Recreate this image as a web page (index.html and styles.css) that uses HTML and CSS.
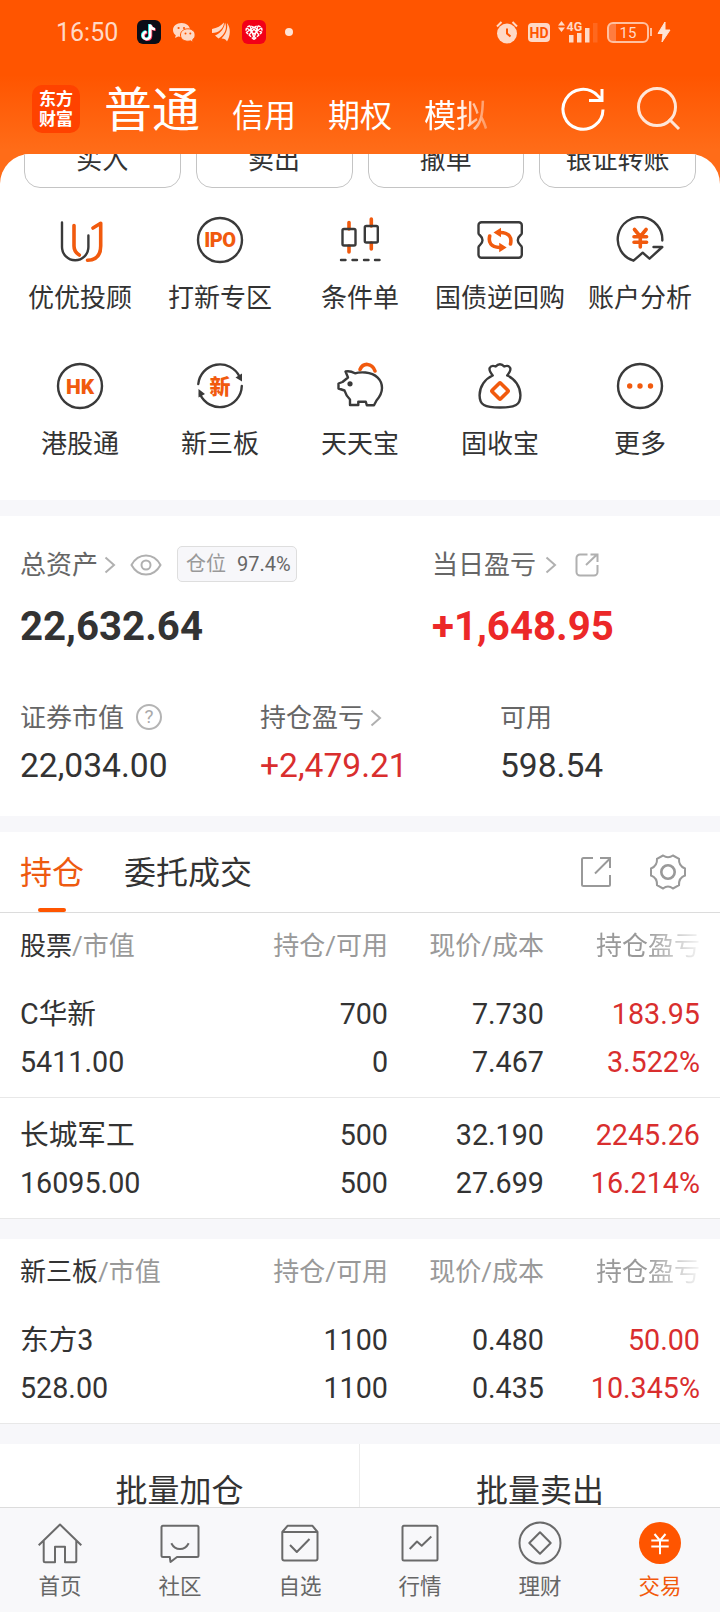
FILE: index.html
```html
<!DOCTYPE html>
<html lang="zh-CN">
<head>
    <meta charset="UTF-8">
    <meta name="viewport" content="width=device-width, initial-scale=1.0">
    <title>交易</title>
    <link rel="stylesheet" href="styles.css">
</head>
<body>
    <header class="header">
        <div class="status-bar">
            <span class="time">16:50</span>
            <div class="status-apps">
                <svg class="app-tiktok" width="24" height="24" viewBox="0 0 24 24">
                    <rect width="24" height="24" rx="6" fill="#0b0d17"/>
                    <g fill="none" stroke-width="2.6">
                        <path d="M12.4 4v11.2a3.6 3.6 0 1 1-3.6-3.6M12.4 4.4c.4 2.6 2.2 4.2 4.8 4.4" stroke="#25f4ee"/>
                        <path d="M14 5v11.2a3.6 3.6 0 1 1-3.6-3.6M14 5.4c.4 2.6 2.2 4.2 4.8 4.4" stroke="#fe2c55"/>
                        <path d="M13.2 4.4v11.2a3.6 3.6 0 1 1-3.6-3.6M13.2 4.8c.4 2.6 2.2 4.2 4.8 4.4" stroke="#fff"/>
                    </g>
                </svg>
                <svg class="app-wechat" width="24" height="24" viewBox="0 0 24 24">
                    <path d="M9.5 3C4.5 3 1 6 1 10c0 2.200 1 4 2.800 5.200L3 18l3.200-1.600c1 .3 2 .4 3.300.4C14.500 16.800 18 14 18 10s-3.500-7-8.500-7z" fill="#ffd9c6"/>
                    <path d="M15.800 8.800c-4.200 0-7.300 2.600-7.300 6.200s3.100 6.200 7.300 6.200c1 0 1.800-.1 2.600-.4l2.900 1.400-.8-2.400c1.600-1.200 2.600-2.800 2.600-4.800 0-3.600-3.100-6.200-7.300-6.200z" fill="#ffd9c6" stroke="#ff5500" stroke-width="1"/>
                    <g fill="#ff5500"><circle cx="6.600" cy="8" r="1.100"/><circle cx="12" cy="8" r="1.100"/><circle cx="13.500" cy="13.400" r="1"/><circle cx="18.300" cy="13.400" r="1"/></g>
                </svg>
                <svg class="app-wing" width="20" height="24" viewBox="0 0 20 24" fill="#ffd9c6">
                    <path d="M1 9C6 8 10 6 13 2.500 13 8 8 13 1 13z"/>
                    <path d="M4 15.500C10 13 13.500 8 14 2.500 16.500 8 14 15 7.500 18.500z"/>
                    <path d="M10.500 18.500C15 14 17 9 16 3c4 5 3.500 13 0 18.500-1-2-2.500-3-5.500-3z"/>
                </svg>
                <svg class="app-heart" width="24" height="24" viewBox="0 0 24 24">
                    <rect width="24" height="24" rx="6" fill="#f20018"/>
                    <path d="M12 19.500L5 13c-2-3-.5-6.500 2.500-7 2 0 3.500.7 4.500 2.200C13 6.700 14.500 6 16.500 6c3 .5 4.500 4 2.500 7z" fill="none" stroke="#fff" stroke-width="1.500" stroke-dasharray="3 1"/>
                    <path d="M5 12l7-5 7 5M7 15l5-6 5 6M8 6l4 12 4-12M5 8l7 6 7-6" fill="none" stroke="#fff" stroke-width="1.300"/>
                </svg>
                <span class="dot"></span>
            </div>
            <div class="status-system">
                <svg width="22" height="24" viewBox="0 0 22 24">
                    <circle cx="11" cy="13.500" r="10" fill="#ffd9c6"/>
                    <path d="M1 6.500L5.500 2M21 6.500L16.500 2" stroke="#ffd9c6" stroke-width="2"/>
                    <path d="M11 8.500v5l3.500 3" fill="none" stroke="#ff5500" stroke-width="2"/>
                </svg>
                <span class="hd">HD</span>
                <svg class="signal" width="41" height="24" viewBox="0 0 41 24" fill="#ffd9c6">
                    <path d="M1 5.500L4.500 1 8 5.500zM1 7.500h7L4.500 12z"/>
                    <text x="9.500" y="11" class="net">4G</text>
                    <rect x="12" y="15" width="4.500" height="7.500"/>
                    <rect x="20" y="13" width="4.500" height="9.500"/>
                    <rect x="28" y="8" width="4.500" height="14.500"/>
                    <rect x="36" y="3" width="4.500" height="19.500" opacity=".15"/>
                </svg>
                <span class="battery">15</span>
                <span class="battery-tip"></span>
                <svg class="bolt" width="14" height="22" viewBox="0 0 14 22"><path d="M8 1L1 12.500h5L5 21l8-12H8z" fill="#ffe3d5" stroke="#ffe3d5"/></svg>
            </div>
        </div>
        <nav class="account-bar">
            <div class="logo"><span>东方</span><span>财富</span></div>
            <div class="account-tabs">
                <span class="current">普通</span>
                <span>信用</span>
                <span>期权</span>
                <span class="fade-out">模拟</span>
            </div>
            <svg class="refresh" width="44" height="44" viewBox="0 0 44 44" fill="none" stroke="#fff" stroke-width="3">
                <path d="M42 22.500A20 20 0 1 1 36.500 8.500l4.500 4.500M41 2v11.500H28"/>
            </svg>
            <svg class="search" width="44" height="44" viewBox="0 0 44 44" fill="none" stroke="#ffe6d8" stroke-width="3">
                <circle cx="20" cy="20" r="18.500"/><path d="M32 32l10 10"/>
            </svg>
        </nav>
    </header>

    <section class="sheet">
        <div class="actions">
            <button>买入</button>
            <button>卖出</button>
            <button>撤单</button>
            <button>银证转账</button>
        </div>
        <div class="quick-grid">
            <a class="quick">
                <svg viewBox="0 0 48 48">
                    <path d="M6 6.500V31a13.200 13.200 0 0 0 26.400 0V19.500"/>
                    <path class="hot" d="M18 9.500V30c0 4 2 7 5.300 9M37 12l7.700-4.700V30c0 9-4 14-13.200 14.300"/>
                </svg>
                <span>优优投顾</span>
            </a>
            <a class="quick">
                <svg viewBox="0 0 48 48"><circle cx="24" cy="24" r="22"/><text x="24" y="31" class="ipo">IPO</text></svg>
                <span>打新专区</span>
            </a>
            <a class="quick">
                <svg viewBox="0 0 48 48">
                    <path class="hot" d="M13 6.500V13M13 30v6M35.300 3v7M35.300 27v6"/>
                    <rect x="6.500" y="13" width="13" height="16.500" rx="1.500"/>
                    <rect x="28.800" y="10" width="13" height="16.500" rx="1.500"/>
                    <path d="M5 44h4.500M16.500 44H21M28 44h4.500M39 44h4.500"/>
                </svg>
                <span>条件单</span>
            </a>
            <a class="quick">
                <svg viewBox="0 0 48 48">
                    <path d="M5.500 6.200h37.300a3 3 0 0 1 3 3v8c0 2-4 2.500-4 7s4 5 4 7v7.600a3 3 0 0 1-3 3H5.500a3 3 0 0 1-3-3v-7.600c0-2 4-2.500 4-7s-4-5-4-7v-8a3 3 0 0 1 3-3z"/>
                    <path class="hot" d="M34.500 28c1.500-6.500-1-11-10-11.500M13.700 20c-1.500 6.500 1 11 10 11.500"/>
                    <path class="hot-fill" d="M17.500 16.500l7.500-4.800v9.600zM30.700 31.500l-7.500-4.800v9.600z"/>
                </svg>
                <span>国债逆回购</span>
            </a>
            <a class="quick">
                <svg viewBox="0 0 48 48">
                    <path d="M46.300 24.500A22.300 22.300 0 1 0 17.500 44.700l9.200-8 6.800 6L46.300 31H37.500"/>
                    <path class="hot" d="M18.500 13.500l5.800 7 5.800-7M24.300 20.500V31M18 20.800h12.600M18 26.200h12.600"/>
                </svg>
                <span>账户分析</span>
            </a>
            <a class="quick">
                <svg viewBox="0 0 48 48"><circle cx="24" cy="24" r="22"/><text x="24" y="31.500" class="hk">HK</text></svg>
                <span>港股通</span>
            </a>
            <a class="quick">
                <svg viewBox="0 0 48 48">
                    <path d="M2.300 22A21.800 21.800 0 0 1 43.500 14.500M45.800 24A21.800 21.800 0 0 1 4 32"/>
                    <path class="dark-fill" d="M39.500 15.500l6.500-4v8zM9 32l-6.500-5v8.500z"/>
                    <text x="24" y="31.500" class="xin">新</text>
                </svg>
                <span>新三板</span>
            </a>
            <a class="quick">
                <svg viewBox="0 0 48 48">
                    <path class="hot" d="M24 7.500c3-7 12-7 15 1.500"/>
                    <path d="M12 15.500l-2.500-6c3-.8 6-.2 9.500 1.800 3-1 7-1 10.500-.8C40 11.500 46 18 46 26c0 5.500-2.500 9-5.500 12.500L38 43.300h-7.200l-1-3.600h-7.500V43H14v-5.500C11.500 35 9.500 32 8.500 28.500l-6-2v-5l4-1.500z"/>
                    <circle class="dark-fill" cx="14" cy="21.800" r="2.600"/>
                </svg>
                <span>天天宝</span>
            </a>
            <a class="quick">
                <svg viewBox="0 0 48 48">
                    <path d="M16.700 13.500c-2-2.500-4-5-3-7.500 1-2 3.500-2.500 6-1.500 2.500-3 6-3 8.500 0 2.500-1 5-.5 6 1.500 1 2.500-1 5-3 7.500 8 3.500 13 11 13.200 19.500.2 10-5 12.500-20.400 12.500S3.400 43 3.600 33c.2-8.500 5.100-16 13.100-19.500z"/>
                    <rect class="hot" x="18" y="23" width="12" height="12" rx="1" transform="rotate(45 24 29)"/>
                </svg>
                <span>固收宝</span>
            </a>
            <a class="quick">
                <svg viewBox="0 0 48 48">
                    <circle cx="24" cy="24" r="22"/>
                    <g class="hot-fill"><circle cx="13.700" cy="24" r="2.700"/><circle cx="24" cy="24" r="2.700"/><circle cx="34.500" cy="24" r="2.700"/></g>
                </svg>
                <span>更多</span>
            </a>
        </div>
    </section>

    <section class="assets">
        <div class="assets-main">
            <div>
                <div class="label">
                    <span>总资产</span>
                    <svg class="chevron" width="12" height="18" viewBox="0 0 12 18"><path d="M1.500 1.500L10 9l-8.500 7.500"/></svg>
                    <svg class="eye" width="32" height="22" viewBox="0 0 32 22"><path d="M1.500 11C5 4.500 10 1.500 16 1.500S27 4.500 30.500 11C27 17.500 22 20.500 16 20.500S5 17.500 1.500 11z"/><circle cx="16" cy="11" r="4.500"/></svg>
                    <span class="badge">仓位 <b>97.4%</b></span>
                </div>
                <div class="total">22,632.64</div>
            </div>
            <div>
                <div class="label">
                    <span>当日盈亏</span>
                    <svg class="chevron wide" width="12" height="18" viewBox="0 0 12 18"><path d="M1.500 1.500L10 9l-8.500 7.500"/></svg>
                    <svg class="share" width="24" height="24" viewBox="0 0 24 24"><path d="M12.500 1.500H5A3.500 3.500 0 0 0 1.500 5v14A3.500 3.500 0 0 0 5 22.500h14a3.500 3.500 0 0 0 3.500-3.500v-7M11 12L22 1.500M15.500 1.500h7V9"/></svg>
                </div>
                <div class="total up">+1,648.95</div>
            </div>
        </div>
        <div class="assets-sub">
            <div>
                <div class="label">
                    <span>证券市值</span>
                    <span class="help">?</span>
                </div>
                <div class="amount">22,034.00</div>
            </div>
            <div>
                <div class="label">
                    <span>持仓盈亏</span>
                    <svg class="chevron" width="12" height="18" viewBox="0 0 12 18"><path d="M1.500 1.500L10 9l-8.500 7.500"/></svg>
                </div>
                <div class="amount up">+2,479.21</div>
            </div>
            <div>
                <div class="label"><span>可用</span></div>
                <div class="amount">598.54</div>
            </div>
        </div>
    </section>

    <section class="positions">
        <div class="tabs">
            <span class="tab active">持仓</span>
            <span class="tab">委托成交</span>
            <svg class="tab-share" width="32" height="32" viewBox="0 0 32 32"><path d="M13 2H3.500A1.500 1.500 0 0 0 2 3.500v25A1.500 1.500 0 0 0 3.500 30h25a1.500 1.500 0 0 0 1.500-1.500V19M15 17.500L30 2.500M20 2h10v10"/></svg>
            <svg width="38" height="38" viewBox="0 0 38 38"><path d="M14 2.500c3 2 7 2 10 0l6 3.300c-.3 4.700 1.500 8 6 9.700v7c-4.500 1.700-6.300 5-6 9.700l-6 3.300c-3-2.500-7-2.500-10 0l-6-3.300c.3-4.700-1.500-8-6-9.700v-7c4.500-1.700 6.300-5 6-9.700z"/><circle cx="19" cy="19" r="6.700" stroke-width="2.600"/></svg>
        </div>

        <div class="table">
            <div class="thead">
                <span><em>股票</em>/市值</span>
                <span>持仓/可用</span>
                <span>现价/成本</span>
                <span class="clipped">持仓盈亏</span>
            </div>
            <div class="trow">
                <span>C华新<br>5411.00</span>
                <span>700<br>0</span>
                <span>7.730<br>7.467</span>
                <span class="up">183.95<br>3.522%</span>
            </div>
            <div class="trow">
                <span>长城军工<br>16095.00</span>
                <span>500<br>500</span>
                <span>32.190<br>27.699</span>
                <span class="up">2245.26<br>16.214%</span>
            </div>
        </div>

        <div class="table">
            <div class="thead">
                <span><em>新三板</em>/市值</span>
                <span>持仓/可用</span>
                <span>现价/成本</span>
                <span class="clipped">持仓盈亏</span>
            </div>
            <div class="trow">
                <span>东方3<br>528.00</span>
                <span>1100<br>1100</span>
                <span>0.480<br>0.435</span>
                <span class="up">50.00<br>10.345%</span>
            </div>
        </div>

        <div class="bulk">
            <span>批量加仓</span>
            <span>批量卖出</span>
        </div>
    </section>

    <nav class="tabbar">
        <a>
            <svg viewBox="0 0 44 44"><path d="M.7 24.300L22 3.500l21.300 20.800M5.700 20v19.800a1.500 1.500 0 0 0 1.500 1.500H17V25.700h10v15.600h9.800a1.500 1.500 0 0 0 1.500-1.500V20"/></svg>
            <span>首页</span>
        </a>
        <a>
            <svg viewBox="0 0 44 44"><path d="M5 4.800h34a1.500 1.500 0 0 1 1.500 1.500v28.200A1.500 1.500 0 0 1 39 36H19l-6.500 5-.7-5H5a1.500 1.500 0 0 1-1.500-1.500V6.300A1.500 1.500 0 0 1 5 4.800zM13.300 22.300c4 7.700 13.400 7.700 17.400 0"/></svg>
            <span>社区</span>
        </a>
        <a>
            <svg viewBox="0 0 44 44"><path d="M4.300 11L9.500 4.800h25L39.500 11v26.500a2 2 0 0 1-2 2h-31.200a2 2 0 0 1-2-2zM4.300 11h35.200M12 24l6.800 7L31.500 18"/></svg>
            <span>自选</span>
        </a>
        <a>
            <svg viewBox="0 0 44 44"><rect x="4.500" y="4.800" width="35" height="34.700" rx="1.500"/><path d="M11.700 28l7.300-7.500 4.700 4.200 9.600-9.200"/></svg>
            <span>行情</span>
        </a>
        <a>
            <svg viewBox="0 0 44 44"><circle cx="22" cy="22" r="20.500"/><path d="M22 11.300L32.700 22 22 32.700 11.300 22z"/></svg>
            <span>理财</span>
        </a>
        <a class="active">
            <svg viewBox="0 0 44 44"><circle cx="22" cy="22" r="21"/><path d="M16.500 13l5.500 6.500 5.500-6.500M22 19.500v13.800M13.300 19.500h17.400M13.300 25.500h17.400"/></svg>
            <span>交易</span>
        </a>
    </nav>
</body>
</html>
```
FILE: styles.css
```css
* {
    margin: 0;
    padding: 0;
    box-sizing: border-box;
}

body {
    width: 720px;
    height: 1612px;
    overflow: hidden;
    display: flex;
    flex-direction: column;
    background: #f7f7fa;
    color: #333;
    font-family: Roboto, "Noto Sans CJK SC", sans-serif;
    font-weight: 400;
}

svg {
    display: block;
    flex-shrink: 0;
}

em, b {
    font-style: normal;
    font-weight: 400;
}

.up {
    color: #d92e2e;
}

/* header */
.header {
    height: 190px;
    margin-bottom: -36px;
    flex-shrink: 0;
    background: linear-gradient(#ff5500 75px, #ff6c18 150px);
}

.status-bar {
    height: 64px;
    display: flex;
    align-items: center;
    padding: 0 49px 0 56px;
    color: #ffd9c6;
}

.time {
    width: 81px;
    font-size: 25px;
    line-height: 30px;
    padding-top: 2px;
}

.status-apps {
    display: flex;
    align-items: center;
}

.app-wechat {
    margin-left: 11px;
}

.app-wing {
    margin-left: 15px;
}

.app-heart {
    margin-left: 11px;
}

.dot {
    width: 8px;
    height: 8px;
    margin-left: 19px;
    border-radius: 50%;
    background: #ffe3d5;
}

.status-system {
    display: flex;
    align-items: center;
    margin-left: auto;
}

.hd {
    width: 22px;
    height: 19px;
    margin-left: 10px;
    border-radius: 4px;
    background: #ffd9c6;
    color: #ff5500;
    font-size: 14px;
    font-weight: 700;
    line-height: 20px;
    text-align: center;
}

.signal {
    margin-left: 7px;
}

.net {
    font-size: 12.5px;
    font-weight: 700;
}

.battery {
    width: 42px;
    height: 21px;
    margin-left: 9px;
    border: 2px solid #ffc0a0;
    border-radius: 6px;
    font-size: 15px;
    line-height: 18px;
    text-align: center;
    background: linear-gradient(90deg, #ff7c40 7px, transparent 7px);
}

.battery-tip {
    width: 2px;
    height: 8px;
    margin-left: 1px;
    background: #ffc0a0;
}

.bolt {
    margin-left: 5px;
}

.account-bar {
    height: 90px;
    display: flex;
    align-items: center;
    padding: 0 39px 0 32px;
}

.logo {
    display: flex;
    flex-direction: column;
    align-items: center;
    width: 48px;
    height: 48px;
    border-radius: 10px;
    background: #ff4200;
    color: #fff;
    font-family: "Noto Sans CJK SC", sans-serif;
    font-size: 17px;
    font-weight: 700;
    line-height: 20px;
    padding-top: 3px;
}

.account-tabs {
    display: flex;
    align-items: baseline;
    gap: 32px;
    margin-left: 24px;
    padding-top: 8px;
    color: #fff;
    font-size: 32px;
    line-height: 60px;
}

.account-tabs .current {
    font-size: 48px;
}

.fade-out {
    -webkit-mask-image: linear-gradient(90deg, #000 55%, rgba(0, 0, 0, .3));
    mask-image: linear-gradient(90deg, #000 55%, rgba(0, 0, 0, .3));
}

.refresh {
    margin-left: auto;
}

.search {
    margin-left: 32px;
}

/* white sheet with shortcuts */
.sheet {
    height: 346px;
    flex-shrink: 0;
    overflow: hidden;
    background: #fff;
    border-radius: 30px 30px 0 0;
}

.actions {
    display: grid;
    grid-template-columns: repeat(4, 1fr);
    gap: 15px;
    padding: 0 24px;
    margin-top: -22px;
}

.actions button {
    height: 56px;
    border: 1px solid #c4c4c4;
    border-radius: 16px;
    background: #fff;
    color: #333;
    font-family: inherit;
    font-size: 26px;
    line-height: 54px;
}

.quick-grid {
    display: grid;
    grid-template-columns: repeat(5, 140px);
    row-gap: 45px;
    padding: 28px 10px 0;
}

.quick {
    display: flex;
    flex-direction: column;
    align-items: center;
    gap: 15px;
    font-size: 26px;
    line-height: 38px;
    white-space: nowrap;
}

.quick svg {
    width: 48px;
    height: 48px;
    fill: none;
    stroke: #3a3a3a;
    stroke-width: 2.4;
    stroke-linecap: round;
    stroke-linejoin: round;
}

.quick .hot {
    stroke: #f15a0e;
    stroke-width: 3.6;
}

.quick .hot-fill {
    fill: #f15a0e;
    stroke: none;
}

.quick .dark-fill {
    fill: #3a3a3a;
    stroke: none;
}

.quick text {
    fill: #f15a0e;
    stroke: none;
    text-anchor: middle;
    font-weight: 900;
}

.ipo {
    font-size: 20px;
    letter-spacing: -.5px;
}

.hk {
    font-size: 21px;
}

.xin {
    font-size: 21px;
}

/* assets */
.assets {
    height: 300px;
    flex-shrink: 0;
    margin-top: 16px;
    padding: 31px 20px 0;
    background: #fff;
}

.assets-main {
    display: grid;
    grid-template-columns: 412px 1fr;
}

.assets-sub {
    display: grid;
    grid-template-columns: repeat(3, 240px);
    margin-top: 49px;
}

.label {
    display: flex;
    align-items: center;
    height: 36px;
    color: #666;
    font-size: 26px;
    line-height: 36px;
}

.label svg {
    fill: none;
    stroke: #b0b0b0;
    stroke-width: 2;
}

.chevron {
    margin-left: 6px;
}

.chevron.wide {
    margin-left: 9px;
}

.eye {
    margin-left: 14px;
}

.share {
    margin-left: 18px;
}

.badge {
    width: 120px;
    height: 36px;
    margin-left: 15px;
    margin-top: -2px;
    padding-left: 8px;
    border: 1px solid #dedede;
    border-radius: 5px;
    background: #f7f7fa;
    color: #999;
    font-size: 20px;
    line-height: 34px;
    white-space: nowrap;
}

.badge b {
    margin-left: 6px;
    color: #666;
}

.help {
    width: 26px;
    height: 26px;
    margin-left: 12px;
    margin-top: -2px;
    border: 2px solid #b4b4b4;
    border-radius: 50%;
    color: #aaa;
    font-size: 19px;
    line-height: 22px;
    text-align: center;
}

.total {
    margin-top: 20px;
    font-size: 40.2px;
    font-weight: 700;
    line-height: 48px;
}

.total.up {
    color: #ec2828;
}

.amount {
    margin-top: 10px;
    font-size: 33.6px;
    line-height: 40px;
}

/* positions */
.positions {
    height: 675px;
    flex-shrink: 0;
    margin-top: 16px;
    overflow: hidden;
}

.tabs {
    display: flex;
    align-items: center;
    height: 81px;
    padding: 0 33px 0 20px;
    border-bottom: 1px solid #dcdcdc;
    background: #fff;
    font-size: 32px;
}

.tabs svg {
    fill: none;
    stroke: #999;
    stroke-width: 2;
}

.tab {
    height: 80px;
    margin-right: 40px;
    line-height: 82px;
}

.tab.active {
    display: flex;
    flex-direction: column;
    align-items: center;
    color: #ee5a10;
}

.tab.active::after {
    content: "";
    width: 28px;
    height: 4px;
    margin-top: -6px;
    border-radius: 2px;
    background: #ff5500;
}

.tab-share {
    margin-left: auto;
    margin-right: 37px;
}

.table {
    margin-bottom: 20px;
    background: #fff;
}

.thead, .trow {
    display: grid;
    grid-template-columns: 208px 160px 156px 156px;
    padding: 0 20px;
    text-align: right;
}

.thead > :first-child, .trow > :first-child {
    text-align: left;
}

.thead {
    height: 64px;
    padding-top: 3px;
    color: #999;
    font-size: 26px;
    line-height: 61px;
}

.thead em {
    color: #333;
}

.clipped {
    -webkit-mask-image: linear-gradient(90deg, #000 65%, rgba(0, 0, 0, .1));
    mask-image: linear-gradient(90deg, #000 65%, rgba(0, 0, 0, .1));
}

.trow {
    height: 121px;
    padding-top: 13px;
    border-bottom: 1px solid #e8e8e8;
    font-size: 28.7px;
    line-height: 48px;
}

.bulk {
    display: grid;
    grid-template-columns: 1fr 1fr;
    height: 95px;
    background: #fff;
    font-size: 32px;
    line-height: 95px;
    text-align: center;
}

.bulk span:first-child {
    border-right: 1px solid #ececec;
}

/* bottom tab bar */
.tabbar {
    display: grid;
    grid-template-columns: repeat(6, 1fr);
    height: 105px;
    flex-shrink: 0;
    padding-top: 13px;
    border-top: 1px solid #dcdcdc;
    background: #f8f8fa;
}

.tabbar a {
    display: flex;
    flex-direction: column;
    align-items: center;
    gap: 7px;
    color: #666;
    font-size: 21.5px;
    line-height: 30px;
}

.tabbar svg {
    width: 44px;
    height: 44px;
    fill: none;
    stroke: #6a6a6a;
    stroke-width: 2;
    stroke-linejoin: round;
}

.tabbar .active {
    color: #f25a0c;
}

.tabbar .active circle {
    fill: #ff5500;
    stroke: none;
}

.tabbar .active path {
    stroke: #fff;
}
```
